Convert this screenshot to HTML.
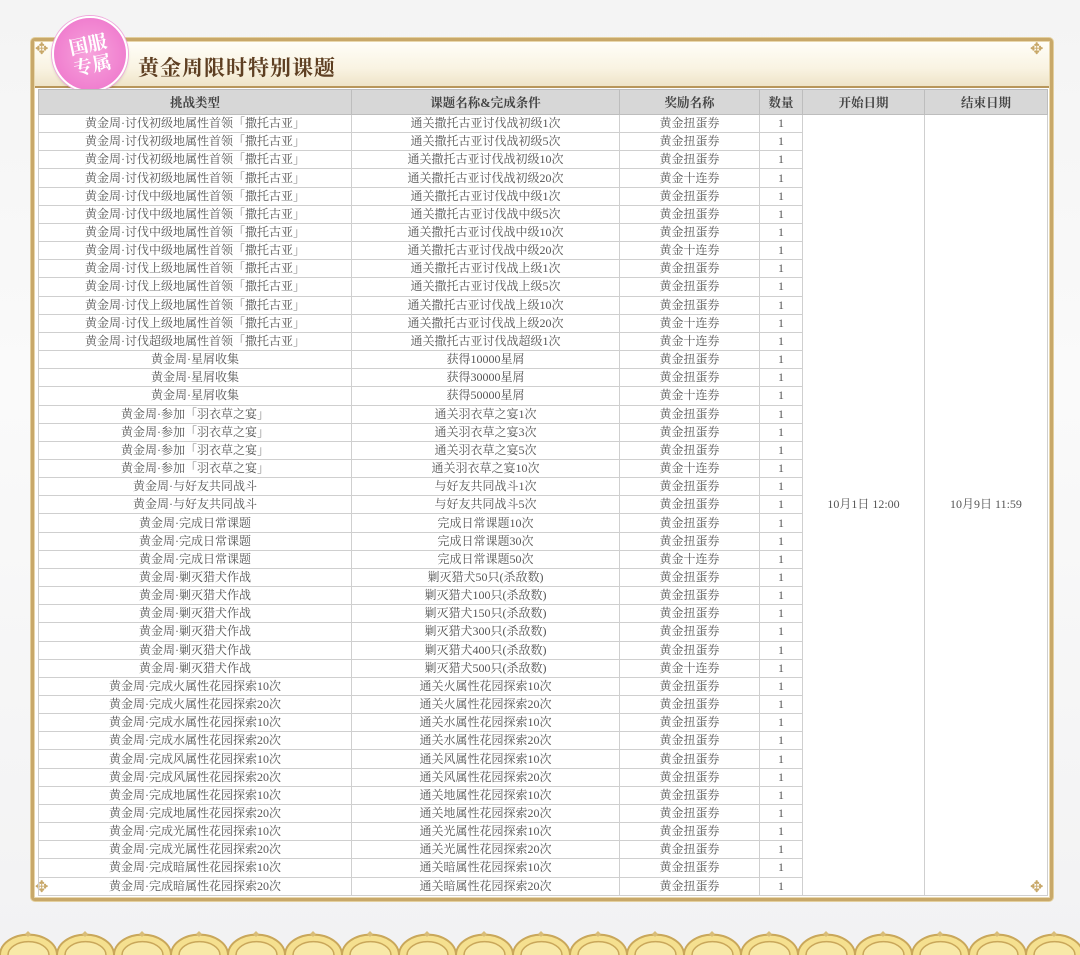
<!DOCTYPE html>
<html><head><meta charset="utf-8"><style>
*{margin:0;padding:0;box-sizing:border-box}
body{width:1080px;height:955px;overflow:hidden;background:linear-gradient(180deg,#f4f4f4 0%,#fafafa 40%,#f2f2f3 100%);position:relative;font-family:"Liberation Serif","Noto Serif CJK SC",serif;color:#555}
.frame{position:absolute;left:31px;top:38px;width:1022px;height:863px;border:3px solid #c8a869;border-radius:4px;background:#fff;box-shadow:inset 0 0 0 1px #e8d7ad,0 0 0 1px #e3cf9e}
.hdr{position:absolute;left:35px;top:42px;width:1014px;height:46px;background:linear-gradient(180deg,#fffef8 0%,#f9f3e2 60%,#efe4c8 100%);border-bottom:2px solid #b8965a}
.title{position:absolute;left:138px;top:52px;font-size:21px;color:#5e3f22;font-family:"Noto Serif CJK SC",serif;font-weight:700;letter-spacing:1px}
table{position:absolute;left:38px;top:89px;width:1009px;border-collapse:collapse;table-layout:fixed;font-size:12px;font-family:"Liberation Serif","Noto Serif CJK SC",serif}
th{height:25px;background:#d7d7d7;color:#444;font-weight:bold;border:1px solid #bdbdbd;font-size:12.5px}
td{height:18.16px;border:1px solid #cfcfcf;text-align:center;line-height:17px;padding:0;white-space:nowrap;color:#555}
.badge{position:absolute;left:52px;top:16px;width:76px;height:76px;border-radius:50%;background:radial-gradient(circle,#f7a3dc 0%,#f07fcf 70%,#e86cc4 100%);border:2px solid #fff;box-shadow:0 0 0 1px #f0a9dc,0 2px 3px rgba(0,0,0,.15);color:#fff;font-family:"Noto Serif CJK SC",serif;font-size:19px;line-height:21px;text-align:center;padding-top:15px;font-weight:bold}
.badge span{display:block;transform:rotate(-12deg)}
.scal{position:absolute;left:0;top:930px;width:1080px;height:25px}
.corner{position:absolute;color:#c8a869;font-size:16px;line-height:16px}
</style></head><body>
<div class="frame"></div>
<div class="hdr"></div>
<div class="corner" style="left:35px;top:42px">✥</div>
<div class="corner" style="left:1030px;top:42px">✥</div>
<div class="corner" style="left:35px;top:880px">✥</div>
<div class="corner" style="left:1030px;top:880px">✥</div>
<div class="badge"><span>国服<br>专属</span></div>
<div class="title">黄金周限时特别课题</div>
<table>
<colgroup><col style="width:313px"><col style="width:268px"><col style="width:140px"><col style="width:43px"><col style="width:122px"><col style="width:123px"></colgroup>
<tr><th>挑战类型</th><th>课题名称&amp;完成条件</th><th>奖励名称</th><th>数量</th><th>开始日期</th><th>结束日期</th></tr>
<tr><td>黄金周·讨伐初级地属性首领「撒托古亚」</td><td>通关撒托古亚讨伐战初级1次</td><td>黄金扭蛋券</td><td>1</td><td rowspan="43">10月1日 12:00</td><td rowspan="43">10月9日 11:59</td></tr>
<tr><td>黄金周·讨伐初级地属性首领「撒托古亚」</td><td>通关撒托古亚讨伐战初级5次</td><td>黄金扭蛋券</td><td>1</td></tr>
<tr><td>黄金周·讨伐初级地属性首领「撒托古亚」</td><td>通关撒托古亚讨伐战初级10次</td><td>黄金扭蛋券</td><td>1</td></tr>
<tr><td>黄金周·讨伐初级地属性首领「撒托古亚」</td><td>通关撒托古亚讨伐战初级20次</td><td>黄金十连券</td><td>1</td></tr>
<tr><td>黄金周·讨伐中级地属性首领「撒托古亚」</td><td>通关撒托古亚讨伐战中级1次</td><td>黄金扭蛋券</td><td>1</td></tr>
<tr><td>黄金周·讨伐中级地属性首领「撒托古亚」</td><td>通关撒托古亚讨伐战中级5次</td><td>黄金扭蛋券</td><td>1</td></tr>
<tr><td>黄金周·讨伐中级地属性首领「撒托古亚」</td><td>通关撒托古亚讨伐战中级10次</td><td>黄金扭蛋券</td><td>1</td></tr>
<tr><td>黄金周·讨伐中级地属性首领「撒托古亚」</td><td>通关撒托古亚讨伐战中级20次</td><td>黄金十连券</td><td>1</td></tr>
<tr><td>黄金周·讨伐上级地属性首领「撒托古亚」</td><td>通关撒托古亚讨伐战上级1次</td><td>黄金扭蛋券</td><td>1</td></tr>
<tr><td>黄金周·讨伐上级地属性首领「撒托古亚」</td><td>通关撒托古亚讨伐战上级5次</td><td>黄金扭蛋券</td><td>1</td></tr>
<tr><td>黄金周·讨伐上级地属性首领「撒托古亚」</td><td>通关撒托古亚讨伐战上级10次</td><td>黄金扭蛋券</td><td>1</td></tr>
<tr><td>黄金周·讨伐上级地属性首领「撒托古亚」</td><td>通关撒托古亚讨伐战上级20次</td><td>黄金十连券</td><td>1</td></tr>
<tr><td>黄金周·讨伐超级地属性首领「撒托古亚」</td><td>通关撒托古亚讨伐战超级1次</td><td>黄金十连券</td><td>1</td></tr>
<tr><td>黄金周·星屑收集</td><td>获得10000星屑</td><td>黄金扭蛋券</td><td>1</td></tr>
<tr><td>黄金周·星屑收集</td><td>获得30000星屑</td><td>黄金扭蛋券</td><td>1</td></tr>
<tr><td>黄金周·星屑收集</td><td>获得50000星屑</td><td>黄金十连券</td><td>1</td></tr>
<tr><td>黄金周·参加「羽衣草之宴」</td><td>通关羽衣草之宴1次</td><td>黄金扭蛋券</td><td>1</td></tr>
<tr><td>黄金周·参加「羽衣草之宴」</td><td>通关羽衣草之宴3次</td><td>黄金扭蛋券</td><td>1</td></tr>
<tr><td>黄金周·参加「羽衣草之宴」</td><td>通关羽衣草之宴5次</td><td>黄金扭蛋券</td><td>1</td></tr>
<tr><td>黄金周·参加「羽衣草之宴」</td><td>通关羽衣草之宴10次</td><td>黄金十连券</td><td>1</td></tr>
<tr><td>黄金周·与好友共同战斗</td><td>与好友共同战斗1次</td><td>黄金扭蛋券</td><td>1</td></tr>
<tr><td>黄金周·与好友共同战斗</td><td>与好友共同战斗5次</td><td>黄金扭蛋券</td><td>1</td></tr>
<tr><td>黄金周·完成日常课题</td><td>完成日常课题10次</td><td>黄金扭蛋券</td><td>1</td></tr>
<tr><td>黄金周·完成日常课题</td><td>完成日常课题30次</td><td>黄金扭蛋券</td><td>1</td></tr>
<tr><td>黄金周·完成日常课题</td><td>完成日常课题50次</td><td>黄金十连券</td><td>1</td></tr>
<tr><td>黄金周·剿灭猎犬作战</td><td>剿灭猎犬50只(杀敌数)</td><td>黄金扭蛋券</td><td>1</td></tr>
<tr><td>黄金周·剿灭猎犬作战</td><td>剿灭猎犬100只(杀敌数)</td><td>黄金扭蛋券</td><td>1</td></tr>
<tr><td>黄金周·剿灭猎犬作战</td><td>剿灭猎犬150只(杀敌数)</td><td>黄金扭蛋券</td><td>1</td></tr>
<tr><td>黄金周·剿灭猎犬作战</td><td>剿灭猎犬300只(杀敌数)</td><td>黄金扭蛋券</td><td>1</td></tr>
<tr><td>黄金周·剿灭猎犬作战</td><td>剿灭猎犬400只(杀敌数)</td><td>黄金扭蛋券</td><td>1</td></tr>
<tr><td>黄金周·剿灭猎犬作战</td><td>剿灭猎犬500只(杀敌数)</td><td>黄金十连券</td><td>1</td></tr>
<tr><td>黄金周·完成火属性花园探索10次</td><td>通关火属性花园探索10次</td><td>黄金扭蛋券</td><td>1</td></tr>
<tr><td>黄金周·完成火属性花园探索20次</td><td>通关火属性花园探索20次</td><td>黄金扭蛋券</td><td>1</td></tr>
<tr><td>黄金周·完成水属性花园探索10次</td><td>通关水属性花园探索10次</td><td>黄金扭蛋券</td><td>1</td></tr>
<tr><td>黄金周·完成水属性花园探索20次</td><td>通关水属性花园探索20次</td><td>黄金扭蛋券</td><td>1</td></tr>
<tr><td>黄金周·完成风属性花园探索10次</td><td>通关风属性花园探索10次</td><td>黄金扭蛋券</td><td>1</td></tr>
<tr><td>黄金周·完成风属性花园探索20次</td><td>通关风属性花园探索20次</td><td>黄金扭蛋券</td><td>1</td></tr>
<tr><td>黄金周·完成地属性花园探索10次</td><td>通关地属性花园探索10次</td><td>黄金扭蛋券</td><td>1</td></tr>
<tr><td>黄金周·完成地属性花园探索20次</td><td>通关地属性花园探索20次</td><td>黄金扭蛋券</td><td>1</td></tr>
<tr><td>黄金周·完成光属性花园探索10次</td><td>通关光属性花园探索10次</td><td>黄金扭蛋券</td><td>1</td></tr>
<tr><td>黄金周·完成光属性花园探索20次</td><td>通关光属性花园探索20次</td><td>黄金扭蛋券</td><td>1</td></tr>
<tr><td>黄金周·完成暗属性花园探索10次</td><td>通关暗属性花园探索10次</td><td>黄金扭蛋券</td><td>1</td></tr>
<tr><td>黄金周·完成暗属性花园探索20次</td><td>通关暗属性花园探索20次</td><td>黄金扭蛋券</td><td>1</td></tr>
</table>
<svg class="scal" viewBox="0 0 1080 25">
<defs><pattern id="p" width="57" height="25" patternUnits="userSpaceOnUse">
<path d="M0 25 A28 20 0 0 1 57 25" fill="#f5e08f" stroke="#c9a75a" stroke-width="2"/>
<path d="M8 25 A20 13 0 0 1 49 25" fill="#f8e9a8" stroke="#c9a75a" stroke-width="1.5"/>
<path d="M28 1 l3 3 l-3 3 l-3 -3z" fill="#d9bd78"/>
</pattern></defs>
<rect width="1080" height="25" fill="url(#p)"/>
</svg>
</body></html>
